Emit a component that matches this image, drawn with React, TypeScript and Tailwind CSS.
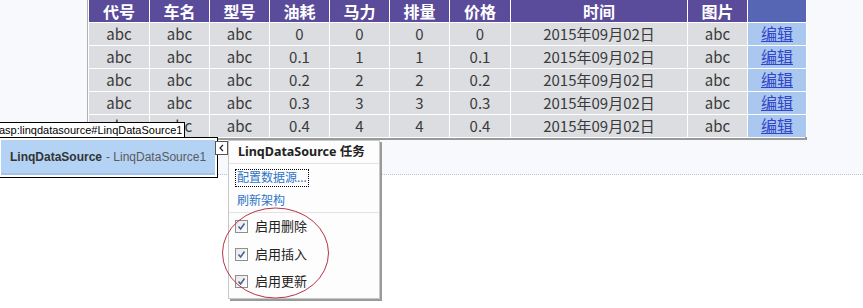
const cols = [61, 60, 60, 60, 60, 60, 61, 177, 60, 59];
const heads = ["代号", "车名", "型号", "油耗", "马力", "排量", "价格", "时间", "图片"];

const rows = [0, 1, 2, 3, 4].map((i) => ({
	code: "abc",
	name: "abc",
	type: "abc",
	oil: i === 0 ? "0" : `0.${i}`,
	power: `${i}`,
	size: `${i}`,
	price: i === 0 ? "0" : `0.${i}`,
	time: "2015年09月02日",
	pic: "abc",
}));

function Check(props: any) {
	return (
		<div className="flex items-center h-[27.5px] pl-[6px]">
			<div className="w-[13px] h-[13px] border border-[#8e8f8f] bg-gradient-to-br from-[#e6e6e6] to-[#ffffff] flex items-center justify-center">
				<svg width="9" height="9" viewBox="0 0 9 9">
					<path d="M1.5 4.5 L3.6 7 L7.5 1.5" fill="none" stroke="#4a5f97" strokeWidth="1.6" />
				</svg>
			</div>
			<span className="ml-[7px] text-[13px] text-[#222]">{props.text}</span>
		</div>
	);
}

export default function App() {
	return (
		<div className="relative w-[863px] h-[308px] overflow-hidden bg-white font-['Noto_Sans','Noto_Sans_CJK_SC',sans-serif]">
			{/* design surface */}
			<div className="h-[175px] bg-[#f7f9fd] border-b border-dotted border-[#b8c4d8]">
				<div className="ml-[87px] w-[720px] border-l border-r-2 border-b-2 border-l-[#b0b0b0] border-r-[#9a9a9a] border-b-[#9a9a9a]">
					<table className="table-fixed border-collapse w-[718px] font-['Noto_Sans_CJK_SC',sans-serif]">
						<colgroup>
							{cols.map((w, i) => (
								<col key={i} style={{ width: w }} />
							))}
						</colgroup>
						<thead>
							<tr className="h-[22px] bg-[#5b4c9b]">
								{heads.map((h) => (
									<th key={h} className="border-x border-white text-white font-bold text-[16px] leading-[20px] p-0">
										{h}
									</th>
								))}
								<th className="border-x border-white bg-[#5766b4] p-0"></th>
							</tr>
						</thead>
						<tbody>
							{rows.map((r, i) => (
								<tr key={i} className="h-[23px] bg-[#dcdde1] text-[#3a3a3a] text-[15px] leading-[20px]">
									<td className="border border-white text-center p-0">{r.code}</td>
									<td className="border border-white text-center p-0">{r.name}</td>
									<td className="border border-white text-center p-0">{r.type}</td>
									<td className="border border-white text-center p-0">{r.oil}</td>
									<td className="border border-white text-center p-0">{r.power}</td>
									<td className="border border-white text-center p-0">{r.size}</td>
									<td className="border border-white text-center p-0">{r.price}</td>
									<td className="border border-white text-center p-0">{r.time}</td>
									<td className="border border-white text-center p-0">{r.pic}</td>
									<td className="border border-white border-b-0 text-center p-0 bg-[#a9c7ef]">
										<a className="text-[#3346c8] underline text-[16px]">编辑</a>
									</td>
								</tr>
							))}
						</tbody>
					</table>
				</div>
			</div>

			{/* control tag */}
			<div className="absolute left-[-6px] top-[122px] h-[16px] pl-[4px] pr-[2px] bg-white border border-black text-[11px] leading-[14px] text-black whitespace-nowrap font-['Liberation_Sans',sans-serif]">
				asp:linqdatasource#LinqDataSource1
			</div>
			<div className="absolute left-[-2px] top-[137px] w-[220px] h-[41px] border border-black bg-white p-[2px]">
				<div className="h-full bg-[#b4d3f4] border-b-2 border-[#a3c3e9] flex items-center pl-[9px] text-[12px] whitespace-nowrap font-['Liberation_Sans',sans-serif]">
					<span className="font-bold text-[#333]">LinqDataSource</span>
					<span className="text-[#5a5a5a] ml-[4px]">- LinqDataSource1</span>
				</div>
			</div>

			{/* smart tag button */}
			<div className="absolute left-[215px] top-[141px] w-[13px] h-[14px] bg-white border border-[#555] flex items-center justify-center">
				<svg width="7" height="8" viewBox="0 0 7 8">
					<path d="M5 1 L2 4 L5 7" fill="none" stroke="#222" strokeWidth="1.2" />
				</svg>
			</div>

			{/* tasks panel */}
			<div className="absolute left-[228px] top-[140px] w-[152px] h-[159px] bg-[#fdfdfd] border border-[#c8c8c8] shadow-[2px_2px_0_#9a9a9a]">
				<div className="h-[23px] flex items-center pl-[9px] text-[12.5px] font-bold text-[#222] border-b border-[#e2e2e2] whitespace-nowrap">
					LinqDataSource 任务
				</div>
				<div className="pl-[6px]">
					<div className="inline-block border border-dotted border-black px-[1px] text-[12px] leading-[16px] text-[#2f74c8]">
						配置数据源...
					</div>
				</div>
				<div className="pl-[8px] pt-[5px] pb-[3px] text-[12px] leading-[16px] text-[#2f74c8] border-b border-[#e2e2e2]">
					刷新架构
				</div>
				<div>
					<Check text="启用删除" />
					<Check text="启用插入" />
					<Check text="启用更新" />
				</div>
			</div>

			{/* red annotation */}
			<svg className="absolute left-0 top-0 pointer-events-none" width="863" height="308">
				<ellipse cx="275.5" cy="253" rx="53" ry="45" fill="none" stroke="#b5344a" strokeWidth="1" />
			</svg>
		</div>
	);
}
